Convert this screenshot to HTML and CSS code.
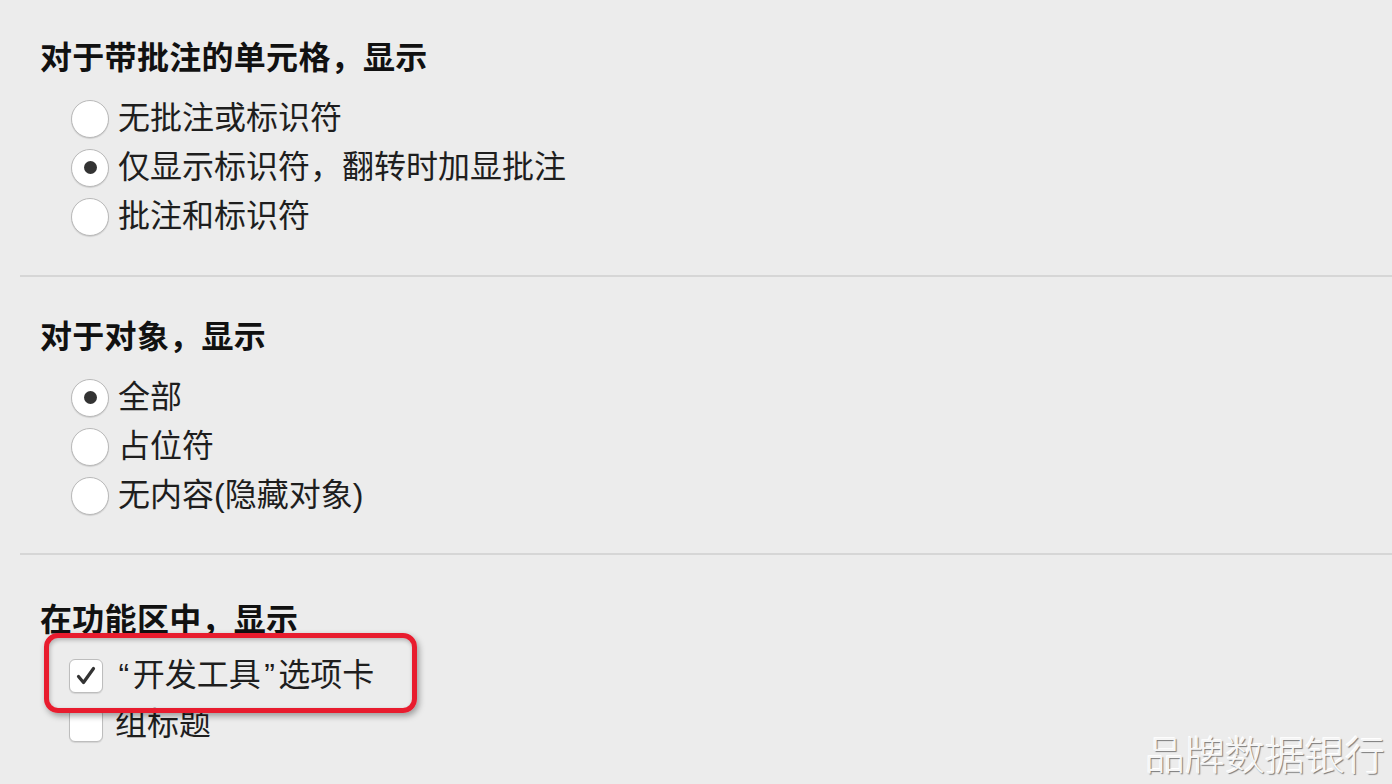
FILE: index.html
```html
<!DOCTYPE html>
<html lang="zh-CN">
<head>
<meta charset="utf-8">
<title>视图偏好设置</title>
<link rel="stylesheet" href="styles.css">
</head>
<body>
<main class="prefs">
  <section class="group group-first">
    <h2 class="group-title">对于带批注的单元格，显示</h2>
    <ul class="options">
      <li class="option"><span class="radio"></span><span class="label">无批注或标识符</span></li>
      <li class="option"><span class="radio is-checked"></span><span class="label">仅显示标识符，翻转时加显批注</span></li>
      <li class="option"><span class="radio"></span><span class="label">批注和标识符</span></li>
    </ul>
  </section>
  <hr class="divider">
  <section class="group group-second">
    <h2 class="group-title">对于对象，显示</h2>
    <ul class="options">
      <li class="option"><span class="radio is-checked"></span><span class="label">全部</span></li>
      <li class="option"><span class="radio"></span><span class="label">占位符</span></li>
      <li class="option"><span class="radio"></span><span class="label">无内容(隐藏对象)</span></li>
    </ul>
  </section>
  <hr class="divider">
  <section class="group group-third">
    <h2 class="group-title">在功能区中，显示</h2>
    <ul class="options options-check">
      <li class="option">
        <span class="checkbox is-checked">
          <svg viewBox="0 0 34 34" width="34" height="34" aria-hidden="true"><path d="M9.5 17.5 L14.5 23.5 L24.5 9.5" fill="none" stroke="#333" stroke-width="3.2" stroke-linecap="round" stroke-linejoin="round"/></svg>
        </span>
        <span class="label"><span class="quote">“</span>开发工具<span class="quote">”</span>选项卡</span>
      </li>
      <li class="option"><span class="checkbox"></span><span class="label">组标题</span></li>
    </ul>
  </section>
  <div class="highlight"></div>
  <div class="watermark">品牌数据银行</div>
</main>
</body>
</html>
```

FILE: styles.css
```css
html, body {
  margin: 0;
  padding: 0;
  background: #ececec;
}

body {
  width: 1392px;
  height: 784px;
  overflow: hidden;
  font-family: "Liberation Sans", "Noto Sans CJK SC", sans-serif;
  color: #1e1e1e;
}

.prefs {
  position: relative;
  height: 784px;
}

.group {
  padding-left: 40px;
}

.group-first {
  padding-top: 38px;
  padding-bottom: 34px;
}

.group-second {
  padding-top: 40px;
  padding-bottom: 33px;
}

.group-third {
  padding-top: 45px;
}

.group-title {
  margin: 0;
  font-size: 32px;
  line-height: 40px;
  font-weight: 700;
  color: #111;
  letter-spacing: 0.3px;
}

.options {
  list-style: none;
  margin: 16px 0 0;
  padding: 0 0 0 31px;
}

.options-check {
  margin-top: 11px;
  padding-left: 29px;
}

.option {
  display: flex;
  align-items: center;
  height: 49px;
  font-size: 32px;
  line-height: 49px;
}

.radio {
  position: relative;
  flex: none;
  width: 36px;
  height: 36px;
  border-radius: 50%;
  background: #fff;
  border: 1px solid #b9b9b9;
  box-shadow: 0 1px 1px rgba(0, 0, 0, 0.12);
  margin-right: 9px;
}

.radio.is-checked::after {
  content: "";
  position: absolute;
  left: 50%;
  top: 50%;
  width: 13px;
  height: 13px;
  margin: -6.5px 0 0 -6.5px;
  border-radius: 50%;
  background: #333;
}

.checkbox {
  display: flex;
  flex: none;
  width: 32px;
  height: 32px;
  border-radius: 6px;
  background: #fff;
  border: 1px solid #bdbdbd;
  box-shadow: 0 1px 1px rgba(0, 0, 0, 0.1);
  margin-right: 12px;
  overflow: hidden;
}

.checkbox svg {
  margin: -1px;
}

.label {
  white-space: nowrap;
}

.quote {
  display: inline-block;
  margin: 0 3.5px;
}

.divider {
  margin: 0 0 0 20px;
  height: 2px;
  border: 0;
  background: #d6d6d6;
}

.highlight {
  position: absolute;
  left: 44px;
  top: 633px;
  width: 363px;
  height: 70px;
  border: 5px solid #e81c2e;
  border-radius: 14px;
  box-shadow: 2px 3px 6px rgba(0, 0, 0, 0.35), inset 1px 2px 4px rgba(0, 0, 0, 0.25);
  pointer-events: none;
}

.watermark {
  position: absolute;
  right: 7px;
  bottom: 4px;
  font-size: 40px;
  line-height: 48px;
  font-weight: 300;
  color: #f6f6f6;
  text-shadow: 1px 1px 1px #7a7a7a, -1px -1px 0 #ffffff;
}
```
